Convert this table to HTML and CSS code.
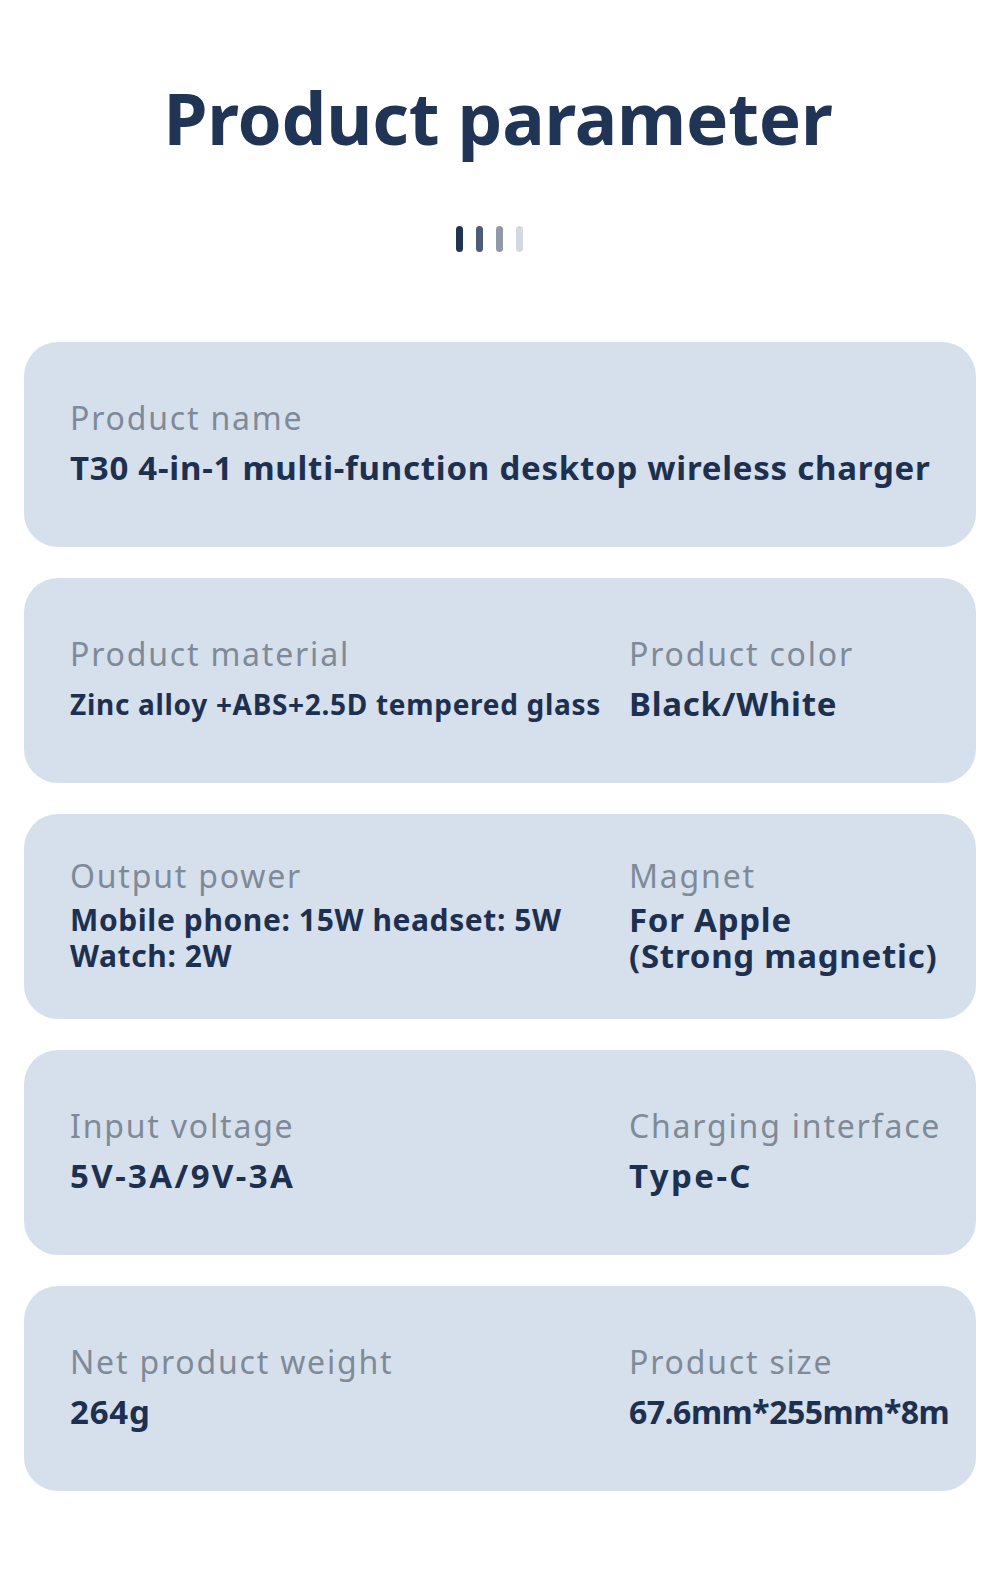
FILE: index.html
```html
<!DOCTYPE html>
<html lang="en">
<head>
<meta charset="utf-8">
<title>Product parameter</title>
<link rel="stylesheet" href="styles.css">
</head>
<body>
<main class="page">
  <header class="head">
    <h1 class="title">Product parameter</h1>
    <div class="dots">
      <span class="dot d1"></span>
      <span class="dot d2"></span>
      <span class="dot d3"></span>
      <span class="dot d4"></span>
    </div>
  </header>

  <section class="cards">
    <div class="card">
      <div class="cell wide">
        <div class="label">Product name</div>
        <div class="value">T30 4-in-1 multi-function desktop wireless charger</div>
      </div>
    </div>

    <div class="card">
      <div class="cell">
        <div class="label">Product material</div>
        <div class="value small">Zinc alloy +ABS+2.5D tempered glass</div>
      </div>
      <div class="cell">
        <div class="label">Product color</div>
        <div class="value">Black/White</div>
      </div>
    </div>

    <div class="card">
      <div class="cell">
        <div class="label">Output power</div>
        <div class="value multi small2">Mobile phone: 15W headset: 5W<br>Watch: 2W</div>
      </div>
      <div class="cell">
        <div class="label">Magnet</div>
        <div class="value multi">For Apple<br>(Strong magnetic)</div>
      </div>
    </div>

    <div class="card">
      <div class="cell">
        <div class="label">Input voltage</div>
        <div class="value wide-digits">5V-3A/9V-3A</div>
      </div>
      <div class="cell">
        <div class="label">Charging interface</div>
        <div class="value wide-digits">Type-C</div>
      </div>
    </div>

    <div class="card">
      <div class="cell">
        <div class="label">Net product weight</div>
        <div class="value">264g</div>
      </div>
      <div class="cell">
        <div class="label">Product size</div>
        <div class="value tight">67.6mm*255mm*8m</div>
      </div>
    </div>
  </section>
</main>
</body>
</html>
```

FILE: styles.css
```css
* { box-sizing: border-box; }
html, body { margin: 0; padding: 0; background: #ffffff; }
body {
  font-family: "Noto Sans", "Open Sans", sans-serif;
  color: #1f3150;
}
.page {
  width: 1000px;
  padding: 80px 24px 60px;
}
.head {
  display: flex;
  flex-direction: column;
  align-items: center;
}
.title {
  margin: 0 4px 0 0;
  font-size: 71px;
  line-height: 76px;
  font-weight: 700;
  color: #203455;
  letter-spacing: -0.2px;
}
.dots {
  display: flex;
  gap: 13px;
  margin-top: 70px;
  padding-right: 22px;
}
.dot {
  width: 7px;
  height: 26px;
  border-radius: 4px;
}
.d1 { background: #1f3352; }
.d2 { background: #4d5c77; }
.d3 { background: #9098a9; }
.d4 { background: #d4d8e0; }

.cards {
  display: flex;
  flex-direction: column;
  gap: 31px;
  margin-top: 90px;
}
.card {
  height: 205px;
  background: #d6e0ec;
  border-radius: 34px;
  padding: 0 16px 0 46px;
  display: grid;
  grid-template-columns: 559px 1fr;
  align-items: center;
}
.cell { margin-top: -4px; }
.cell.wide { grid-column: 1 / -1; }
.label {
  font-size: 32px;
  line-height: 40px;
  color: #7f8a99;
  letter-spacing: 1.8px;
}
.value {
  margin-top: 10px;
  font-size: 33px;
  line-height: 40px;
  font-weight: 700;
  color: #1e3050;
  letter-spacing: 0.75px;
}
.value.small {
  font-size: 28px;
  letter-spacing: 0.7px;
}
.value.multi {
  margin-top: 6px;
  line-height: 36px;
}
.value.small2 {
  font-size: 30px;
  letter-spacing: 0.6px;
}
.value.wide-digits {
  letter-spacing: 2.4px;
}
.value.tight {
  font-size: 32px;
  letter-spacing: -0.5px;
}
```
